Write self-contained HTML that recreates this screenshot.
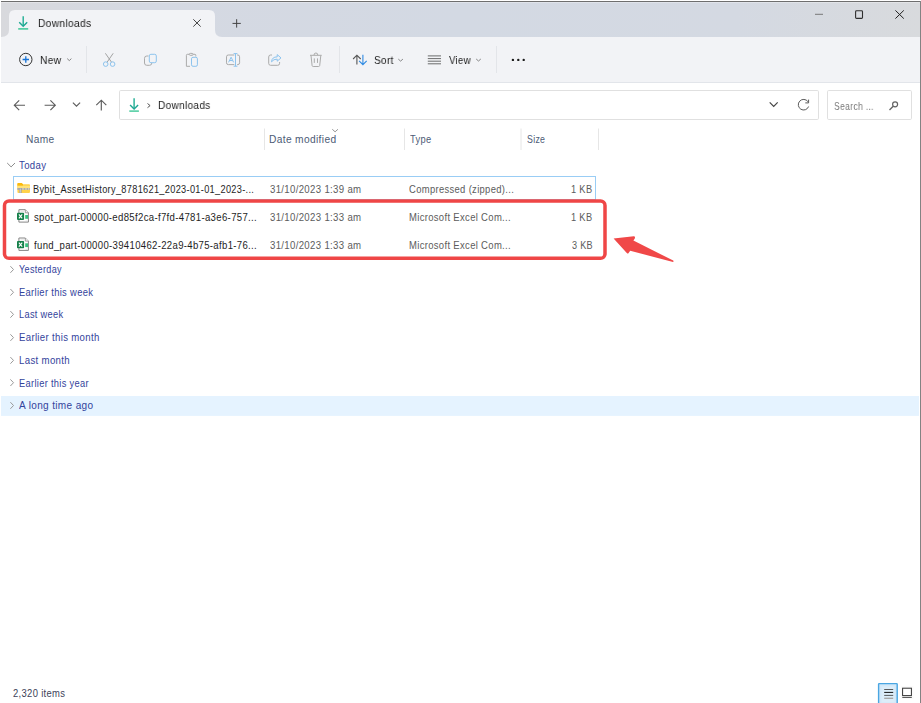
<!DOCTYPE html>
<html><head><meta charset="utf-8"><style>
html,body{margin:0;padding:0;width:921px;height:703px;overflow:hidden;background:#fff;position:relative;font-family:'Liberation Sans', sans-serif;}
.t{position:absolute;white-space:pre;transform-origin:0 0;}
.a{position:absolute;}
</style></head><body>
<div class="a" style="left:1px;top:2px;width:919px;height:35px;background:linear-gradient(90deg,#d8d9dd 0%,#d5d9e2 15%,#d3d9e3 50%,#d4d9e2 80%,#d8dadd 100%)"></div>
<div class="a" style="left:1px;top:1px;width:920px;height:1px;background:#6e6e6e"></div>
<div class="a" style="left:1px;top:2px;width:919px;height:1px;background:rgba(255,255,255,0.3)"></div>
<div class="a" style="left:1px;top:37px;width:919px;height:45px;background:#f2f3f6"></div>
<div class="a" style="left:1px;top:82px;width:919px;height:1px;background:#e2e5ea"></div>
<div class="a" style="left:920px;top:1px;width:1px;height:702px;background:#838383"></div>
<svg class="a" style="left:0;top:0" width="921" height="703" viewBox="0 0 921 703">
<!-- tab -->
<path d="M1,37 Q9,37 9,30 L9,16 Q9,10 15,10 L209,10 Q215,10 215,16 L215,30 Q215,37 222,37 Z" fill="#f2f3f6"/>
<!-- tab download icon -->
<g fill="none" stroke-linecap="butt">
<path d="M23.2,16.3 V26" stroke="#1fae93" stroke-width="1.4"/>
<path d="M19.2,22.3 L23.2,26.2 L27.2,22.3" stroke="#1fa793" stroke-width="1.4"/>
<path d="M18.2,28.9 H28.2" stroke="#3cc796" stroke-width="1.5"/>
</g>
<!-- tab close -->
<path d="M193.3,19.3 L200.7,26.6 M200.7,19.3 L193.3,26.6" stroke="#444" stroke-width="1" fill="none"/>
<!-- plus -->
<path d="M232.5,23.4 H240.8 M236.65,19.2 V27.6" stroke="#444" stroke-width="1" fill="none"/>
<!-- window controls -->
<path d="M815,14.3 H823" stroke="#777" stroke-width="1"/>
<rect x="855.6" y="10.8" width="6.9" height="7.6" rx="0.9" fill="none" stroke="#2e2e2e" stroke-width="1.1"/>
<path d="M895.4,10.4 L903.8,18.6 M903.8,10.4 L895.4,18.6" stroke="#222" stroke-width="1" fill="none"/>
<!-- New -->
<circle cx="25.8" cy="59.5" r="6.2" fill="none" stroke="#333" stroke-width="1"/>
<path d="M25.8,56.3 V62.7 M22.6,59.5 H29" stroke="#1572d6" stroke-width="1.3"/>
<path d="M67.2,58.6 L69.3,60.6 L71.4,58.6" stroke="#777" stroke-width="0.9" fill="none"/>
<!-- separators -->
<path d="M86.5,46 V73 M339.5,46 V73 M496.5,46 V73" stroke="#e3e5e9" stroke-width="1"/>
<!-- scissors -->
<g fill="none" stroke-width="1">
<path d="M105.4,53.3 L111.6,62.3 M113.2,53.3 L107,62.3" stroke="#a3a3a3"/>
<circle cx="105.7" cy="64.1" r="2.3" stroke="#8cc3ee"/>
<circle cx="112.6" cy="64.1" r="2.3" stroke="#8cc3ee"/>
</g>
<!-- copy -->
<g fill="none" stroke-width="1">
<path d="M148.5,56 H146.8 Q144.5,56 144.5,58.3 V63 Q144.5,65.3 146.8,65.3 H149.5 Q151.8,65.3 151.8,63" stroke="#ababab"/>
<rect x="149.3" y="54.3" width="7" height="8.4" rx="1.6" stroke="#8cc3ee"/>
</g>
<!-- paste -->
<g fill="none" stroke-width="1">
<path d="M189,54.3 H187.3 Q186.4,54.3 186.4,55.3 V66.3 H190 M193.2,54.3 H195 Q195.8,54.3 195.8,55.3 V56.5" stroke="#ababab"/>
<rect x="189.3" y="53.4" width="3.8" height="1.9" rx="0.9" stroke="#ababab"/>
<rect x="191.5" y="57.3" width="5.9" height="9" rx="1.5" stroke="#8cc3ee"/>
</g>
<!-- rename -->
<g fill="none" stroke-width="1">
<path d="M234.3,55 H228.3 Q226.5,55 226.5,56.8 V62.8 Q226.5,64.6 228.3,64.6 H234.3 M237,55 H237.8 Q239.6,55 239.6,56.8 V62.8 Q239.6,64.6 237.8,64.6 H237" stroke="#ababab"/>
<path d="M235.5,53.6 V66.2 M233.6,53.6 H237.4 M233.6,66.2 H237.4" stroke="#8cc3ee"/>
<path d="M228.6,62.3 L231.1,57.2 L233.6,62.3 M229.6,60.5 H232.6" stroke="#8cc3ee"/>
</g>
<!-- share -->
<g fill="none" stroke-width="1">
<path d="M272,55 H270.6 Q268.7,55 268.7,57 V63.3 Q268.7,65.3 270.6,65.3 H277.7 Q279.6,65.3 279.6,63.3 V62" stroke="#ababab"/>
<path d="M271.5,61.8 Q272,56.8 277.2,56.9 V54.6 L281,57.9 L277.2,61.2 V59.1 Q273.6,59 271.5,61.8 Z" stroke="#8cc3ee" stroke-linejoin="round"/>
</g>
<!-- delete -->
<g fill="none" stroke-width="1" stroke="#ababab">
<path d="M310,55.3 H321.7"/>
<path d="M314,55.1 Q314,53 315.9,53 Q317.8,53 317.8,55.1"/>
<path d="M311,55.5 L312.1,65.6 Q312.3,66.5 313.2,66.5 H318.6 Q319.5,66.5 319.7,65.6 L320.8,55.5"/>
<path d="M314.3,58.4 V62.9 M317.5,58.4 V62.9"/>
</g>
<!-- sort icon -->
<g fill="none" stroke-width="1.1">
<path d="M356.9,55.2 V64.6 M353.1,59 L356.9,55.2 L360.7,59" stroke="#555"/>
<path d="M362.9,54.8 V64.6 M359.1,60.9 L362.9,64.7 L366.7,60.9" stroke="#2f8ae2"/>
</g>
<path d="M398.3,59.1 L400.6,61.1 L402.9,59.1" stroke="#777" stroke-width="0.9" fill="none"/>
<!-- view icon -->
<path d="M427.8,55.9 H441 M427.8,58.6 H441 M427.8,61.2 H441 M427.8,63.8 H441" stroke="#5c5c5c" stroke-width="0.9"/>
<path d="M476.2,59 L478.5,61 L480.8,59" stroke="#777" stroke-width="0.9" fill="none"/>
<!-- dots -->
<circle cx="512.9" cy="59.9" r="1.2" fill="#1b1b1b"/>
<circle cx="518.3" cy="59.9" r="1.2" fill="#1b1b1b"/>
<circle cx="523.7" cy="59.9" r="1.2" fill="#1b1b1b"/>
<!-- nav -->
<g fill="none" stroke="#5c5c5c" stroke-width="1.15">
<path d="M14.3,105.2 H25 M19.2,100.3 L14.3,105.2 L19.2,110.1"/>
<path d="M44.6,105.2 H55.3 M50.4,100.3 L55.3,105.2 L50.4,110.1"/>
<path d="M72.9,102.6 L76.5,106.2 L80.1,102.6"/>
<path d="M101.3,100.2 V110.6 M96.3,105.2 L101.3,100.2 L106.3,105.2"/>
</g>
<!-- address box -->
<rect x="119.5" y="90.5" width="699" height="29" rx="1.2" fill="#fff" stroke="#e0e0e0" stroke-width="1"/>
<g fill="none">
<path d="M134.1,98.2 V108.8" stroke="#1fae93" stroke-width="1.4"/>
<path d="M130.1,105 L134.1,109 L138.1,105" stroke="#1fa793" stroke-width="1.4"/>
<path d="M129.3,111.1 H138.9" stroke="#3cc796" stroke-width="1.4"/>
</g>
<path d="M147.5,103.5 L150.1,105.6 L147.5,107.7" stroke="#555" stroke-width="1" fill="none"/>
<path d="M769.7,102.3 L773.7,106.5 L777.7,102.3" stroke="#444" stroke-width="1.15" fill="none"/>
<path d="M807.9,101.6 A5.3,5.3 0 1 0 808.6,106.5" stroke="#5a5a5a" stroke-width="1" fill="none"/>
<path d="M808.6,99.6 V102.9 H805.3" stroke="#5a5a5a" stroke-width="1" fill="none"/>
<!-- search box -->
<rect x="827.5" y="90.5" width="84" height="29" rx="1.2" fill="#fff" stroke="#e0e0e0" stroke-width="1"/>
<circle cx="895.1" cy="104.3" r="2.5" fill="none" stroke="#626262" stroke-width="1.2"/>
<path d="M893.2,106.3 L889.5,110" stroke="#626262" stroke-width="1.3"/>
<!-- column separators -->
<path d="M264.5,128.5 V150 M404.5,128.5 V150 M521,128.5 V150 M598.5,128.5 V150" stroke="#e6e6e6" stroke-width="1"/>
<path d="M332.3,129.3 L335.1,131.8 L337.9,129.3" stroke="#777" stroke-width="0.8" fill="none"/>
<!-- today chevron -->
<path d="M7.2,163 L11.1,166.9 L15,163" stroke="#8c8c8c" stroke-width="1" fill="none"/>
<!-- focus rect -->
<rect x="13.5" y="176.5" width="582" height="23" fill="none" stroke="#99cdf5" stroke-width="1"/>
<!-- zip folder -->
<g>
<path d="M17.4,184 Q17.4,183 18.4,183 H21.6 L23,184.3 H29 Q30,184.3 30,185.3 V192 Q30,193 29,193 H18.4 Q17.4,193 17.4,192 Z" fill="#ffd24a"/>
<path d="M17.4,184 Q17.4,183 18.4,183 H21.6 L23,184.3 V185.8 H17.4 Z" fill="#fbb90c"/>
<rect x="17.4" y="185.8" width="12.6" height="2.2" fill="#ffe27a"/>
<rect x="17.4" y="188" width="12.6" height="1.9" fill="#a9aab0"/>
<rect x="22.3" y="188.3" width="1.4" height="1.3" fill="#f3e3b0"/>
<rect x="25.3" y="188.3" width="1.4" height="1.3" fill="#f3e3b0"/>
<rect x="28.1" y="188.3" width="1.2" height="1.3" fill="#f3e3b0"/>
<rect x="19.3" y="188" width="2.3" height="5" fill="#a0a0a4"/>
<rect x="19.8" y="188.5" width="0.9" height="4.2" fill="#d8d8dc"/>
</g>
<!-- excel icons -->
<g><path d="M18.9,209.7 H25.3 L28.4,212.8 V222.1 H18.9 Z" fill="#fff" stroke="#858585" stroke-width="1"/>
<path d="M25.3,209.7 V212.8 H28.4" fill="#f4f4f4" stroke="#858585" stroke-width="0.8"/>
<path d="M20.5,211.6 H24 M25.5,221 H27" stroke="#d0d0d0" stroke-width="0.6"/>
<rect x="25.2" y="215" width="2.9" height="3.8" fill="#37c07e"/>
<rect x="17" y="212.7" width="7.1" height="7.2" rx="0.8" fill="#15804a"/>
<path d="M18.9,214.3 L22.2,218.3 M22.2,214.3 L18.9,218.3" stroke="#fff" stroke-width="1.1"/></g>
<g transform="translate(0,28.3)"><path d="M18.9,209.7 H25.3 L28.4,212.8 V222.1 H18.9 Z" fill="#fff" stroke="#858585" stroke-width="1"/>
<path d="M25.3,209.7 V212.8 H28.4" fill="#f4f4f4" stroke="#858585" stroke-width="0.8"/>
<path d="M20.5,211.6 H24 M25.5,221 H27" stroke="#d0d0d0" stroke-width="0.6"/>
<rect x="25.2" y="215" width="2.9" height="3.8" fill="#37c07e"/>
<rect x="17" y="212.7" width="7.1" height="7.2" rx="0.8" fill="#15804a"/>
<path d="M18.9,214.3 L22.2,218.3 M22.2,214.3 L18.9,218.3" stroke="#fff" stroke-width="1.1"/></g>
<!-- hover row -->
<rect x="1" y="396" width="918" height="19.9" fill="#e5f3ff"/>
<!-- group chevrons -->
<g fill="none" stroke="#9a9a9a" stroke-width="1">
<path d="M10.4,266.2 L13.5,269.5 L10.4,272.8"/>
<path d="M10.4,289 L13.5,292.3 L10.4,295.6"/>
<path d="M10.4,311.1 L13.5,314.4 L10.4,317.7"/>
<path d="M10.4,334.3 L13.5,337.6 L10.4,340.9"/>
<path d="M10.4,357.1 L13.5,360.4 L10.4,363.7"/>
<path d="M10.4,379.4 L13.5,382.7 L10.4,386"/>
<path d="M10.4,402.2 L13.5,405.5 L10.4,408.8"/>
</g>
<!-- red box -->
<rect x="4.5" y="201" width="600.5" height="57.3" rx="4.5" fill="none" stroke="#ef4646" stroke-width="3.5"/>
<!-- red arrow -->
<path d="M613.6,238.6 L633.8,236.2 Q635.5,236.3 634.8,238.4 L633.4,240.4 L673.2,260.6 Q674.2,261.6 673,261.9 L630.2,250.8 L628.6,253 Q627.8,254 626.8,253 Z" fill="#f04848"/>
<!-- bottom right view buttons -->
<rect x="878.6" y="683.6" width="18.6" height="22" rx="0.6" fill="#d3e8f8" stroke="#4aa6e2" stroke-width="1.4"/>
<rect x="881.5" y="686.5" width="13" height="16" fill="#dcedf9"/>
<path d="M884.2,689.5 H893.2 M884.2,695.4 H893.2" stroke="#4a4a4a" stroke-width="0.9"/>
<path d="M884.2,692.4 H893.2" stroke="#111" stroke-width="1"/>
<path d="M884.2,698.3 H893.2" stroke="#a8a8a8" stroke-width="1.4"/>
<rect x="901" y="686" width="12.5" height="13" fill="#fbfbfb"/>
<rect x="902.6" y="688.2" width="8.8" height="7.4" fill="#fff" stroke="#333" stroke-width="1"/>
<path d="M902.3,697.4 H911.8" stroke="#333" stroke-width="0.9"/>
</svg>

<div class="t" style="left:38.38px;top:17.95px;font-size:11.0px;line-height:11.0px;color:#1b1b1b;letter-spacing:0.35px;transform:scaleX(0.9284);will-change:transform;">Downloads</div>
<div class="t" style="left:40.09px;top:55.32px;font-size:10.8px;line-height:10.8px;color:#1b1b1b;letter-spacing:0.35px;transform:scaleX(0.9431);will-change:transform;">New</div>
<div class="t" style="left:373.50px;top:54.92px;font-size:10.8px;line-height:10.8px;color:#1b1b1b;letter-spacing:0.35px;transform:scaleX(0.9292);will-change:transform;">Sort</div>
<div class="t" style="left:448.60px;top:55.32px;font-size:10.8px;line-height:10.8px;color:#1b1b1b;letter-spacing:0.35px;transform:scaleX(0.8912);will-change:transform;">View</div>
<div class="t" style="left:157.70px;top:100.42px;font-size:10.8px;line-height:10.8px;color:#1b1b1b;letter-spacing:0.35px;transform:scaleX(0.9302);will-change:transform;">Downloads</div>
<div class="t" style="left:834.16px;top:101.95px;font-size:10.3px;line-height:10.3px;color:#7a7a7a;letter-spacing:0.35px;transform:scaleX(0.8363);will-change:transform;">Search ...</div>
<div class="t" style="left:26.09px;top:134.73px;font-size:10.2px;line-height:10.2px;color:#4d5b76;letter-spacing:0.35px;transform:scaleX(0.9973);">Name</div>
<div class="t" style="left:269.38px;top:134.83px;font-size:10.2px;line-height:10.2px;color:#4d5b76;letter-spacing:0.35px;transform:scaleX(1.0008);">Date modified</div>
<div class="t" style="left:409.61px;top:134.83px;font-size:10.2px;line-height:10.2px;color:#4d5b76;letter-spacing:0.35px;transform:scaleX(0.9163);">Type</div>
<div class="t" style="left:526.55px;top:134.73px;font-size:10.2px;line-height:10.2px;color:#4d5b76;letter-spacing:0.35px;transform:scaleX(0.8600);">Size</div>
<div class="t" style="left:19.41px;top:160.73px;font-size:10.2px;line-height:10.2px;color:#33439c;letter-spacing:0.35px;transform:scaleX(0.9432);">Today</div>
<div class="t" style="left:33.26px;top:184.83px;font-size:10.2px;line-height:10.2px;color:#1e1e1e;letter-spacing:0.35px;transform:scaleX(0.9032);">Bybit_AssetHistory_8781621_2023-01-01_2023-...</div>
<div class="t" style="left:33.91px;top:213.03px;font-size:10.2px;line-height:10.2px;color:#1e1e1e;letter-spacing:0.35px;transform:scaleX(0.9414);">spot_part-00000-ed85f2ca-f7fd-4781-a3e6-757...</div>
<div class="t" style="left:34.00px;top:241.43px;font-size:10.2px;line-height:10.2px;color:#1e1e1e;letter-spacing:0.35px;transform:scaleX(0.9379);">fund_part-00000-39410462-22a9-4b75-afb1-76...</div>
<div class="t" style="left:269.61px;top:184.83px;font-size:10.2px;line-height:10.2px;color:#5c5c5c;letter-spacing:0.35px;transform:scaleX(0.9432);">31/10/2023 1:39 am</div>
<div class="t" style="left:269.61px;top:213.03px;font-size:10.2px;line-height:10.2px;color:#5c5c5c;letter-spacing:0.35px;transform:scaleX(0.9432);">31/10/2023 1:33 am</div>
<div class="t" style="left:269.61px;top:241.43px;font-size:10.2px;line-height:10.2px;color:#5c5c5c;letter-spacing:0.35px;transform:scaleX(0.9432);">31/10/2023 1:33 am</div>
<div class="t" style="left:409.23px;top:184.83px;font-size:10.2px;line-height:10.2px;color:#5c5c5c;letter-spacing:0.35px;transform:scaleX(0.9254);">Compressed (zipped)...</div>
<div class="t" style="left:408.94px;top:213.03px;font-size:10.2px;line-height:10.2px;color:#5c5c5c;letter-spacing:0.35px;transform:scaleX(0.9307);">Microsoft Excel Com...</div>
<div class="t" style="left:408.94px;top:241.43px;font-size:10.2px;line-height:10.2px;color:#5c5c5c;letter-spacing:0.35px;transform:scaleX(0.9307);">Microsoft Excel Com...</div>
<div class="t" style="left:571.35px;top:184.83px;font-size:10.2px;line-height:10.2px;color:#5c5c5c;letter-spacing:0.35px;transform:scaleX(0.9103);">1 KB</div>
<div class="t" style="left:571.35px;top:213.03px;font-size:10.2px;line-height:10.2px;color:#5c5c5c;letter-spacing:0.35px;transform:scaleX(0.9103);">1 KB</div>
<div class="t" style="left:571.73px;top:241.43px;font-size:10.2px;line-height:10.2px;color:#5c5c5c;letter-spacing:0.35px;transform:scaleX(0.8937);">3 KB</div>
<div class="t" style="left:19.42px;top:265.33px;font-size:10.2px;line-height:10.2px;color:#33439c;letter-spacing:0.35px;transform:scaleX(0.8910);">Yesterday</div>
<div class="t" style="left:18.85px;top:288.13px;font-size:10.2px;line-height:10.2px;color:#33439c;letter-spacing:0.35px;transform:scaleX(0.9196);">Earlier this week</div>
<div class="t" style="left:18.86px;top:310.23px;font-size:10.2px;line-height:10.2px;color:#33439c;letter-spacing:0.35px;transform:scaleX(0.9060);">Last week</div>
<div class="t" style="left:18.83px;top:333.43px;font-size:10.2px;line-height:10.2px;color:#33439c;letter-spacing:0.35px;transform:scaleX(0.9413);">Earlier this month</div>
<div class="t" style="left:18.83px;top:356.23px;font-size:10.2px;line-height:10.2px;color:#33439c;letter-spacing:0.35px;transform:scaleX(0.9459);">Last month</div>
<div class="t" style="left:18.86px;top:378.53px;font-size:10.2px;line-height:10.2px;color:#33439c;letter-spacing:0.35px;transform:scaleX(0.9112);">Earlier this year</div>
<div class="t" style="left:19.00px;top:401.33px;font-size:10.2px;line-height:10.2px;color:#33439c;letter-spacing:0.35px;transform:scaleX(0.9866);">A long time ago</div>
<div class="t" style="left:12.53px;top:689.03px;font-size:10.2px;line-height:10.2px;color:#3c3f58;letter-spacing:0.35px;transform:scaleX(0.9258);">2,320 items</div>
</body></html>
